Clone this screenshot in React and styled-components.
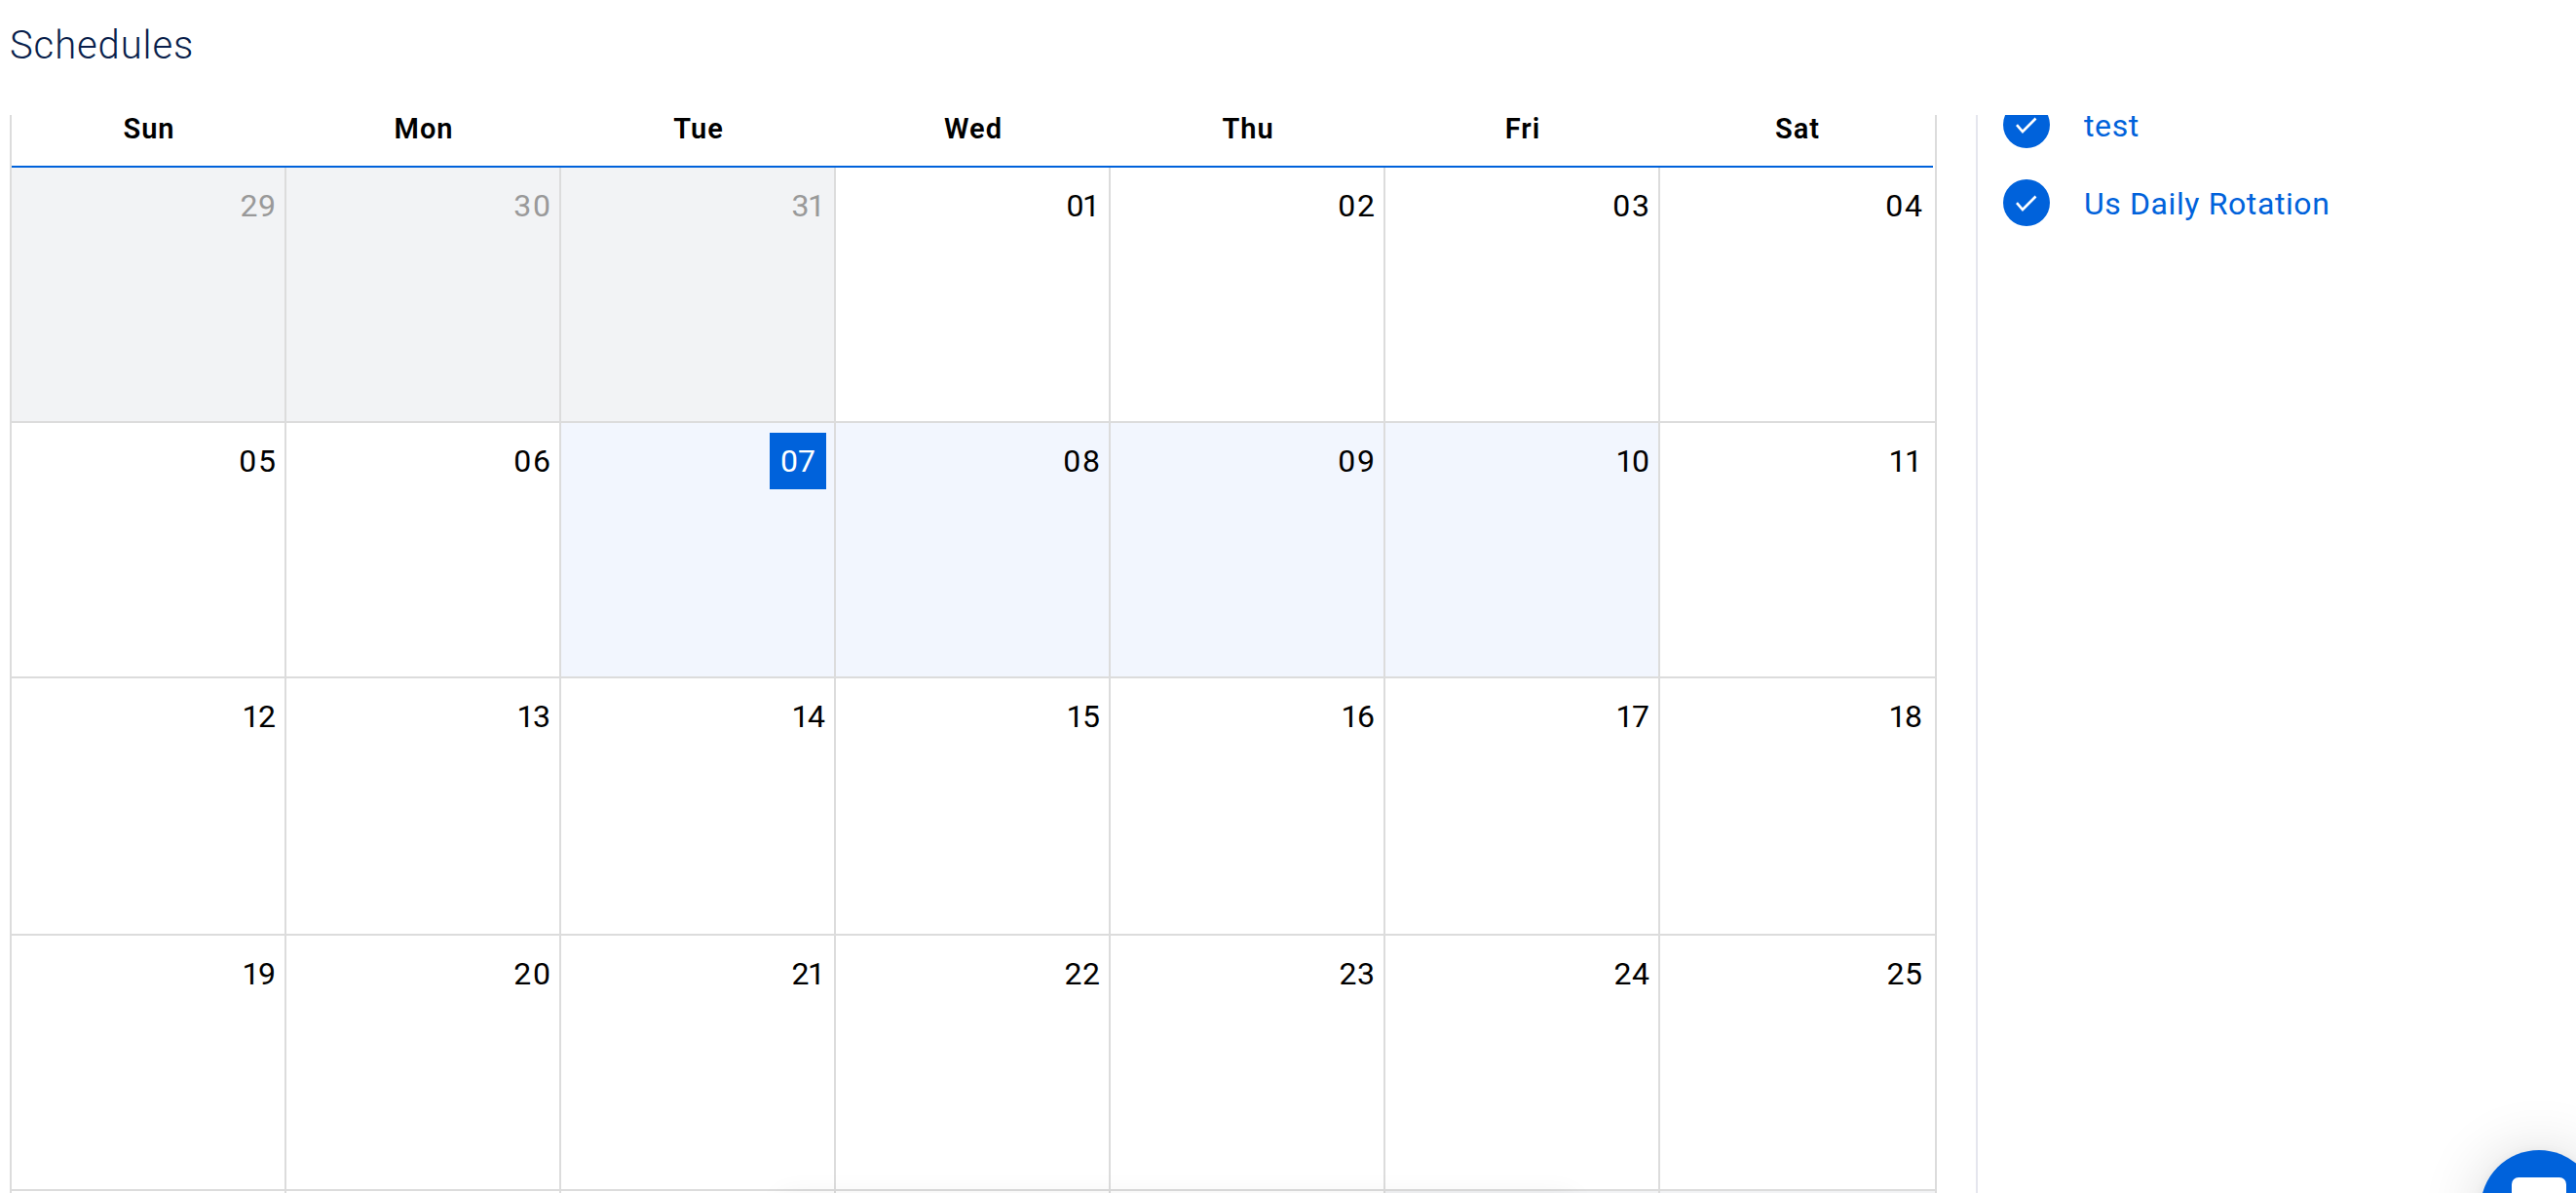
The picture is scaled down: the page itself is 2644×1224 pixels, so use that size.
import React from 'react'
import styled, { createGlobalStyle } from 'styled-components'

const GlobalStyle = createGlobalStyle`
  * {
    box-sizing: border-box;
  }

  body {
    margin: 0;
    background: #fff;
    font-family: Roboto, 'Liberation Sans', sans-serif;
    overflow: hidden;
  }
`;

const Page = styled.div`
  position: relative;
  display: flex;
  flex-direction: column;
  width: 100%;
  height: 100vh;
  overflow: hidden;
`;

const Title = styled.h1`
  position: relative;
  z-index: 1;
  flex: none;
  height: 118px;
  margin: 0;
  padding: 24px 10px 0;
  background: #fff;
  font-size: 40px;
  font-weight: 300;
  line-height: 46px;
  letter-spacing: 0.9px;
  color: #0a1f4c;
`;

const Content = styled.div`
  display: flex;
  flex: 1;
  min-height: 0;
  padding-left: 10px;
`;

const Calendar = styled.div`
  flex: none;
  width: 1978px;
  border: solid #dcdcdc;
  border-width: 0 2px;
`;

const WeekHeader = styled.div`
  display: grid;
  grid-template-columns: repeat(7, 282px);
  width: 1972px;
  height: 54px;
  border-bottom: 2px solid #0062db;
`;

const DayName = styled.div`
  font-size: 29px;
  font-weight: 600;
  line-height: 29px;
  letter-spacing: 1px;
  text-align: center;
`;

const Week = styled.div`
  display: grid;
  grid-template-columns: repeat(7, 282px);
  height: ${props => props.$height}px;
  border-bottom: 2px solid #dcdcdc;
`;

const backgrounds = {
  off: '#f2f3f5',
  active: '#f2f6fe',
};

const Day = styled.div`
  display: flex;
  justify-content: flex-end;
  align-items: flex-start;
  padding: 10px 8px 0 0;
  border-right: 2px solid #dcdcdc;
  background: ${props => backgrounds[props.$type] || '#fff'};
  color: ${props => props.$type === 'off' ? '#999' : '#000'};

  &:last-child {
    padding-right: 12px;
    border-right: 0;
  }
`;

const DayNumber = styled.span`
  margin-right: ${props => props.$today ? 0 : 1 - props.$spacing}px;
  font-size: 32px;
  line-height: 59px;
  letter-spacing: ${props => props.$spacing}px;

  ${props => props.$today ? `
    width: 58px;
    height: 58px;
    background: #0062db;
    color: #fff;
    letter-spacing: 0;
    text-align: center;
  ` : ''}
`;

const Sidebar = styled.div`
  display: flex;
  flex-direction: column;
  gap: 32px;
  flex: 1;
  margin-left: 40px;
  padding-left: 26px;
  border-left: 2px solid #e5e6ee;
`;

const Schedule = styled.div`
  display: flex;
  align-items: center;
  flex: none;
  height: 48px;
  color: #0062db;

  &:first-child {
    margin-top: -14px;
  }
`;

const Check = styled.span`
  display: flex;
  justify-content: center;
  align-items: center;
  width: 48px;
  height: 48px;
  margin-right: 35px;
  padding-top: 2px;
  border-radius: 50%;
  background: #0062db;
`;

const ScheduleName = styled.span`
  padding-top: 2px;
  font-size: 32px;
  line-height: 48px;
  letter-spacing: 0.6px;
`;

// top edge of the panel docked right under the viewport
const DockShadow = styled.div`
  position: absolute;
  left: 800px;
  top: 1226px;
  width: 816px;
  height: 60px;
  border-radius: 8px;
  box-shadow: 0 0 28px rgba(0, 0, 0, 0.06);
`;

const ChatButton = styled.div`
  position: absolute;
  left: 2546px;
  top: 1180px;
  display: flex;
  justify-content: center;
  width: 120px;
  height: 120px;
  padding-top: 28px;
  border-radius: 50%;
  background: #0062db;
  box-shadow: 0 2px 12px rgba(0, 0, 0, 0.06), 0 4px 64px rgba(0, 0, 0, 0.16);
`;

const ChatBubble = styled.span`
  width: 56px;
  height: 64px;
  border-radius: 7px;
  background: #fff;
`;

const dayNames = ['Sun', 'Mon', 'Tue', 'Wed', 'Thu', 'Fri', 'Sat'];

const weeks = [
  { height: 262, days: ['29', '30', '31', '01', '02', '03', '04'] },
  { height: 262, days: ['05', '06', '07', '08', '09', '10', '11'] },
  { height: 264, days: ['12', '13', '14', '15', '16', '17', '18'] },
  { height: 262, days: ['19', '20', '21', '22', '23', '24', '25'] },
  { height: 262, days: ['', '', '', '', '', '', ''] },
];

const schedules = ['test', 'Us Daily Rotation'];

const getType = (week, day) => {
  if (week === 0 && day < 3) return 'off';
  if (week === 1 && day > 1 && day < 6) return 'active';
  if (week === 4 && day > 4) return 'off';
  return 'default';
};

// digits with a "1" sit tighter, the ones with a "0" wider
const getSpacing = number => {
  if (number.includes('1')) return -1.5;
  return number.includes('0') ? 1.8 : 0.5;
};

const App = () => (
  <Page>
    <GlobalStyle />
    <Title>Schedules</Title>
    <Content>
      <Calendar>
        <WeekHeader>
          {dayNames.map(name => <DayName key={name}>{name}</DayName>)}
        </WeekHeader>
        {weeks.map((week, i) => (
          <Week key={i} $height={week.height}>
            {week.days.map((number, j) => (
              <Day key={j} $type={getType(i, j)}>
                {number && (
                  <DayNumber $today={number === '07'} $spacing={getSpacing(number)}>
                    {number}
                  </DayNumber>
                )}
              </Day>
            ))}
          </Week>
        ))}
      </Calendar>
      <Sidebar>
        {schedules.map(name => (
          <Schedule key={name}>
            <Check>
              <svg width="22" height="18" viewBox="0 0 22 18" fill="none" stroke="#fff" strokeWidth="2.6">
                <path d="M1 8.2 L7 15 L20.5 1.5" />
              </svg>
            </Check>
            <ScheduleName>{name}</ScheduleName>
          </Schedule>
        ))}
      </Sidebar>
    </Content>
    <DockShadow />
    <ChatButton>
      <ChatBubble />
    </ChatButton>
  </Page>
)

export default App
